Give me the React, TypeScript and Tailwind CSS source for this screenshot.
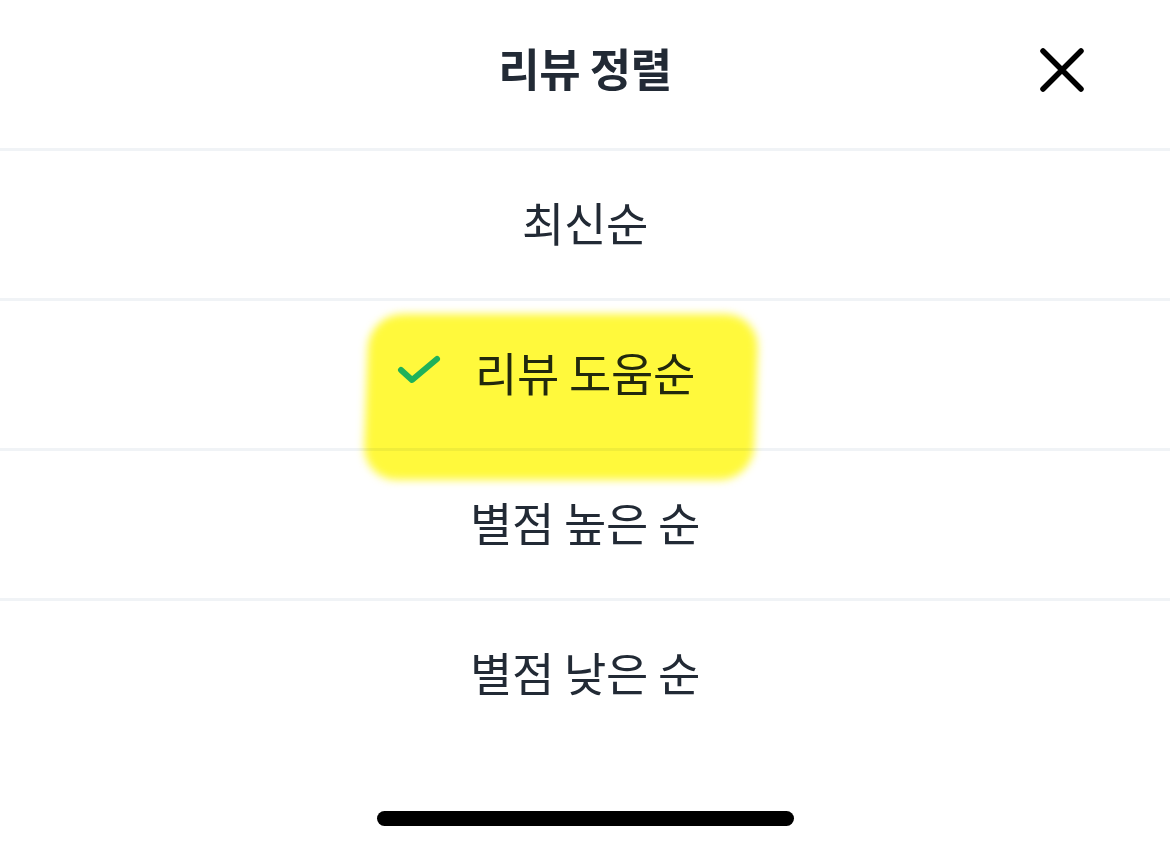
import React from 'react';

const options = ['최신순', '리뷰 도움순', '별점 높은 순', '별점 낮은 순'];
const selected = 1;

function CheckIcon() {
  return (
    <svg width="46" height="34" viewBox="0 0 46 34" fill="none">
      <path d="M4 17 L15 27 L40 6" stroke="#1fb25a" strokeWidth="6" strokeLinecap="round" strokeLinejoin="round" />
    </svg>
  );
}

function CloseIcon() {
  return (
    <svg width="46" height="46" viewBox="0 0 46 46" fill="none">
      <path d="M4 4 L42 42 M42 4 L4 42" stroke="#000" strokeWidth="5.5" strokeLinecap="round" />
    </svg>
  );
}

export default function App() {
  return (
    <div
      className="relative w-[1170px] h-[850px] bg-white text-[#222a35] overflow-hidden flex flex-col"
      style={{ fontFamily: '"Noto Sans CJK KR", "Noto Sans", sans-serif' }}
    >
      <div className="relative flex items-center justify-center h-[148px] pb-[12px]">
        <h2 className="text-[45px] font-bold tracking-[-0.5px]">리뷰 정렬</h2>
        <button className="absolute right-[85px] top-[47px]">
          <CloseIcon />
        </button>
      </div>
      <div className="flex flex-col">
        {options.map((opt, i) => (
          <div key={opt} className="border-t-[3px] border-[#f0f3f6] h-[150px] flex items-start justify-center pt-[40px]">
            <div className="relative text-[46px] leading-[60px] tracking-[-0.3px]">
              {i === selected && (
                <span className="absolute z-10 left-[-78px] top-[12px]">
                  <CheckIcon />
                </span>
              )}
              {opt}
            </div>
          </div>
        ))}
      </div>
      <div className="mt-auto mb-[24px] self-center w-[417px] h-[15px] rounded-full bg-black" />
      <div
        className="absolute left-[366px] top-[314px] w-[390px] h-[166px] bg-[#fff93c] mix-blend-multiply rounded-[34px] blur-[4px] -skew-x-[2deg]"
      />
    </div>
  );
}
